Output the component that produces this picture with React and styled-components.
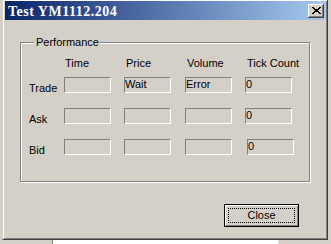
import React from 'react';
import styled, { createGlobalStyle } from 'styled-components';

const GlobalStyle = createGlobalStyle`
  html, body {
    margin: 0;
    padding: 0;
    background: #d4d0c8;
    overflow: hidden;
  }
  body {
    font-family: "Liberation Sans", Arial, sans-serif;
    font-size: 11px;
    color: #000;
  }
`;

const Screen = styled.div`
  width: 331px;
  height: 244px;
  display: flex;
  flex-direction: column;
`;

const Window = styled.div`
  box-sizing: border-box;
  margin-left: 2px;
  width: 326px;
  height: 240px;
  flex: none;
  border-left: 1px solid #d4d0c8;
  border-right: 1px solid #404040;
  border-bottom: 1px solid #404040;
  box-shadow: inset 1px 1px 0 #fff, inset -1px -1px 0 #808080;
  padding: 1px 1px 2px 2px;
  background: #d4d0c8;
  display: flex;
  flex-direction: column;
`;

const TitleBar = styled.div`
  height: 19px;
  flex: none;
  display: flex;
  align-items: center;
  justify-content: space-between;
  padding: 0 2px 0 3px;
  background: linear-gradient(to right, #0a246a, #a6caf0);
`;

const TitleText = styled.span`
  font-family: "Liberation Serif", "Times New Roman", serif;
  font-weight: bold;
  font-size: 14px;
  letter-spacing: 0.5px;
  color: #fff;
  line-height: 19px;
  padding-top: 2px;
`;

const CaptionButton = styled.div`
  box-sizing: border-box;
  width: 16px;
  height: 14px;
  margin-top: 1px;
  background: #d4d0c8;
  border-right: 1px solid #404040;
  border-bottom: 1px solid #404040;
  box-shadow: inset 1px 1px 0 #fff, inset -1px -1px 0 #808080;
  display: flex;
  align-items: center;
  justify-content: center;
  padding-left: 1px;
`;

const Body = styled.div`
  flex: 1;
  display: flex;
  flex-direction: column;
  padding: 16px 15px 0 15px;
`;

const GroupBox = styled.fieldset`
  margin: 0;
  width: 290px;
  box-sizing: border-box;
  padding: 8px 0 24px 8px;
  border: 1px solid #808080;
  box-shadow: 1px 1px 0 #fff, inset 1px 1px 0 #fff;
  display: flex;
  flex-direction: column;
  gap: 13px;
`;

const Legend = styled.legend`
  margin-left: 5px;
  padding: 0 1px 0 2px;
  line-height: 13px;
  background: #d4d0c8;
`;

const Row = styled.div`
  display: grid;
  grid-template-columns: 35px 60px 61px 60px 47px;
  align-items: start;
  margin-bottom: ${p => (p.$header ? '-6px' : '0')};
`;

const Header = styled.span`
  line-height: 13px;
  white-space: nowrap;
  padding-left: ${p => p.$pad || 1}px;
`;

const RowLabel = styled.span`
  line-height: 13px;
  padding-top: 5px;
`;

const Field = styled.div`
  box-sizing: border-box;
  width: 47px;
  height: 16px;
  margin-left: ${p => p.$shift || 0}px;
  border-top: 1px solid #808080;
  border-left: 1px solid #808080;
  border-right: 1px solid #fff;
  border-bottom: 1px solid #fff;
  line-height: 13px;
  white-space: nowrap;
  overflow: hidden;
`;

const Footer = styled.div`
  display: flex;
  justify-content: flex-end;
  padding-right: 12px;
  margin-top: 22px;
`;

const Button = styled.button`
  box-sizing: border-box;
  width: 75px;
  height: 23px;
  padding: 3px;
  margin: 0;
  border: 1px solid #000;
  background: #d4d0c8;
  box-shadow: inset 1px 1px 0 #fff, inset -1px -1px 0 #808080;
  display: flex;
  font-family: "Liberation Sans", Arial, sans-serif;
  font-size: 11px;
  color: #000;
`;

const FocusRing = styled.span`
  flex: 1;
  border: 1px dotted #000;
  display: flex;
  align-items: center;
  justify-content: center;
  line-height: 13px;
`;

const Underlay = styled.div`
  height: 4px;
  flex: none;
  display: flex;
`;

const UnderSeg = styled.div`
  width: ${p => p.$w}px;
  flex: ${p => (p.$grow ? 1 : 'none')};
  background: ${p => p.$c};
`;

const rows = [
  { label: 'Trade', values: ['', 'Wait', 'Error', '0'] },
  { label: 'Ask', values: ['', '', '', '0'] },
  { label: 'Bid', values: ['', '', '', '0'], tickShift: 2 },
];

function CloseGlyph() {
  return (
    <svg width="9" height="7" viewBox="0 0 9 7" shapeRendering="crispEdges">
      <path d="M0 0h2v1h1v1h3v-1h1v-1h2v1h-1v1h-1v1h-1v1h1v1h1v1h1v1h-2v-1h-1v-1h-3v1h-1v1h-2v-1h1v-1h1v-1h1v-1h-1v-1h-1v-1h-1z" fill="#000" />
      <path d="M3 2h3v1h-3zM3 4h3v1h-3z" fill="#000" />
    </svg>
  );
}

export default function App() {
  return (
    <Screen>
      <GlobalStyle />
      <Window>
        <TitleBar>
          <TitleText>Test YM1112.204</TitleText>
          <CaptionButton>
            <CloseGlyph />
          </CaptionButton>
        </TitleBar>
        <Body>
          <GroupBox>
            <Legend>Performance</Legend>
            <Row $header>
              <span />
              <Header>Time</Header>
              <Header $pad={2}>Price</Header>
              <Header $pad={2}>Volume</Header>
              <Header $pad={2}>Tick Count</Header>
            </Row>
            {rows.map(r => (
              <Row key={r.label}>
                <RowLabel>{r.label}</RowLabel>
                {r.values.map((v, i) => (
                  <Field key={i} $shift={i === 3 ? r.tickShift : 0}>{v}</Field>
                ))}
              </Row>
            ))}
          </GroupBox>
          <Footer>
            <Button>
              <FocusRing>Close</FocusRing>
            </Button>
          </Footer>
        </Body>
      </Window>
      <Underlay>
        <UnderSeg $w={52} $c="#d4d0c8" />
        <UnderSeg $w={1} $c="#808080" />
        <UnderSeg $w={225} $c="#fff" />
        <UnderSeg $w={1} $c="#e0ddd8" />
        <UnderSeg $grow $c="#d4d0c8" />
      </Underlay>
    </Screen>
  );
}
